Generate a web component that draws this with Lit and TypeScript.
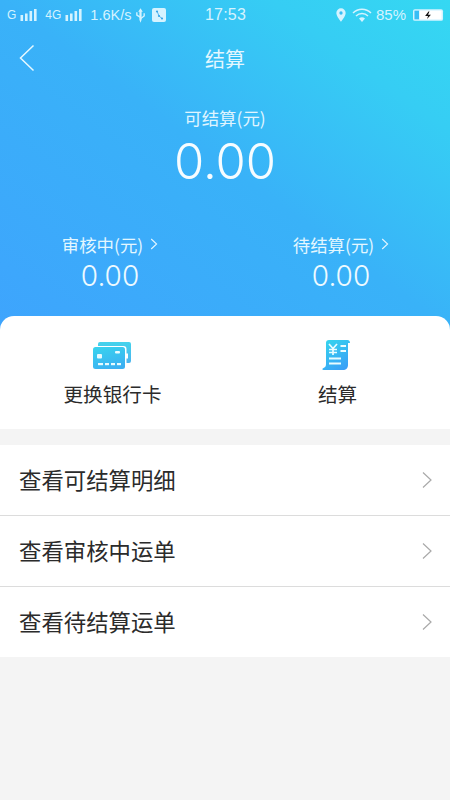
import { LitElement, html, css } from "lit";
import { customElement } from "lit/decorators.js";

const chev = html`<svg class="chev" viewBox="0 0 12 20" width="12" height="20"><path d="M2 2.500 10 10 2 17.500" fill="none" stroke="#a9a9a9" stroke-width="1.200"/></svg>`;
const smallChev = html`<svg class="small-chev" viewBox="0 0 8 12" width="8" height="12"><path d="M1.200 1 6.600 6 1.200 11" fill="none" stroke="#e4f6ff" stroke-width="1.100"/></svg>`;
const bars = html`<svg viewBox="0 0 18 14" width="18" height="14"><g fill="#d5f3ff"><rect x="0.500" y="7" width="2.600" height="6"/><rect x="5" y="5.500" width="2.600" height="7.500"/><rect x="9.500" y="3" width="2.600" height="10"/><rect x="14" y="1" width="2.600" height="12"/></g></svg>`;

@customElement("app-root")
export class AppRoot extends LitElement {
  static styles = css`
    :host { display: block; width: 450px; height: 800px; overflow: hidden; background: #f4f4f4;
      font-family: "Noto Sans CJK SC", "Noto Sans", sans-serif; }
    .top { height: 330px; box-sizing: border-box; background: linear-gradient(to bottom left, #35d8f2 0%, #36cdf4 20%, #39b2f8 50%, #3ea4fd 100%); color: #e6f8ff; display: flex; flex-direction: column; }
    .status { height: 30px; display: grid; grid-template-columns: 1fr auto 1fr; align-items: center; padding: 0 6px 0 7px; font-family: "Liberation Sans", sans-serif; font-size: 14.500px; color: #d5f3ff; }
    .sl, .sr { display: flex; align-items: center; gap: 4px; }
    .sr { justify-content: flex-end; }
    .sl .g { font-size: 12px; }
    .sl .net { margin-left: 3px; }
    .sl .speed { margin-left: 3px; }
    .box { margin-left: 2px; }
    .time { font-size: 16px; letter-spacing: 0.200px; }
    .loc { margin-right: 2px; }
    .pct { font-size: 15px; margin-right: 3px; margin-top: -2px; }
    .nav { height: 56px; position: relative; display: flex; align-items: center; justify-content: center; font-size: 20px; color: #e3f7ff; }
    .back { position: absolute; left: 18px; top: 14px; }
    .main { text-align: center; margin-top: 20px; }
    .main .label { font-size: 17.400px; line-height: 24px; color: #e0f5ff; }
    .main .value { font-family: Inter, sans-serif; font-weight: 350; font-size: 49px; line-height: 56px; margin-top: 4px; color: #f6fcff; }
    .subs { display: grid; grid-template-columns: 220px 218px; column-gap: 12px; margin-top: 43px; text-align: center; }
    .sub .label { font-size: 17.400px; line-height: 24px; display: flex; gap: 7px; justify-content: center; align-items: center; color: #e3f7ff; }
    .sub .value { font-family: Inter, sans-serif; font-weight: 350; font-size: 28px; line-height: 34px; margin-top: 2px; color: #eefaff; }
    .small-chev { margin-top: -3px; }
    .actions { position: relative; margin-top: -14px; height: 113px; background: #fff; border-radius: 14px 14px 0 0; display: grid; grid-template-columns: 225px 225px; }
    .action { display: flex; flex-direction: column; align-items: center; padding-top: 24px; font-size: 19.600px; color: #2b2b2b; }
    .action span { line-height: 28px; margin-top: 10px; }
    .card-icon { margin: 2px 0 0 -1px; }
    .bill-icon { margin-right: 4px; }
    .list { margin-top: 16px; background: #fff; }
    .row { height: 70px; display: flex; align-items: center; justify-content: space-between; padding: 0 17px 0 19px; font-size: 22.400px; color: #2b2b2b; border-bottom: 1px solid #dcdcdc; }
    .row span { margin-bottom: 2px; }
    .row:last-child { border-bottom: none; }
  `;

  render() {
    return html`
      <div class="top">
        <div class="status">
          <div class="sl">
            <span class="g">G</span>${bars}
            <span class="g net">4G</span>${bars}
            <span class="speed">1.6K/s</span>
            <svg viewBox="0 0 12 18" width="11" height="17"><path d="M6 1 8.500 5H7.200v8.500L6 17l-1.200-3.500V5H3.500Z" fill="#d5f3ff"/><path d="M6 11 2 8.500V5.500M6 12.500 10 9.500V6.500" fill="none" stroke="#d5f3ff" stroke-width="1.500"/></svg>
            <svg class="box" viewBox="0 0 14 14" width="14" height="14"><rect width="14" height="14" rx="2" fill="#d5f3ff"/><path d="M5 3 7 8 10 10.500" fill="none" stroke="#3aa6e8" stroke-width="0.800"/><circle cx="5" cy="3.500" r="1.100" fill="#3aa6e8"/><circle cx="7" cy="8" r="1.100" fill="#3aa6e8"/><circle cx="10" cy="10.500" r="1.100" fill="#3aa6e8"/></svg>
          </div>
          <div class="time">17:53</div>
          <div class="sr">
            <svg class="loc" viewBox="0 0 12 16" width="10" height="14"><path d="M6 0a5.600 5.600 0 0 1 5.600 5.600C11.600 9.500 6 16 6 16S.4 9.500.4 5.600A5.600 5.600 0 0 1 6 0Z" fill="#d5f3ff"/><circle cx="6" cy="5.600" r="2" fill="#38bdf5"/></svg>
            <svg viewBox="0 0 20 14" width="20" height="14"><g fill="none" stroke="#d5f3ff" stroke-width="1.500"><path d="M1 5a12.500 12.500 0 0 1 18 0"/><path d="M4 8a8.500 8.500 0 0 1 12 0"/></g><path d="M7 10.500a4.500 4.500 0 0 1 6 0L10 14Z" fill="#d5f3ff"/></svg>
            <span class="pct">85%</span>
            <svg viewBox="0 0 32 14" width="31" height="14"><rect x="0" y="1" width="31" height="12" rx="2" fill="#d5f3ff"/><rect x="1.500" y="2.500" width="5" height="9" fill="#38bdf5"/><rect x="6.500" y="2.500" width="23" height="9" fill="#fff"/><path d="M16 3.500 12.500 8h3l-1 3 4-4.200h-3l1.500-3.300Z" fill="#111"/></svg>
          </div>
        </div>
        <div class="nav">
          <svg class="back" viewBox="0 0 18 28" width="18" height="28"><path d="M15.500 1.500 2.500 14l13 12.500" fill="none" stroke="#e6f8ff" stroke-width="1.500"/></svg>
          结算
        </div>
        <div class="main">
          <div class="label">可结算(元)</div>
          <div class="value">0.00</div>
        </div>
        <div class="subs">
          <div class="sub"><div class="label">审核中(元) ${smallChev}</div><div class="value">0.00</div></div>
          <div class="sub"><div class="label">待结算(元) ${smallChev}</div><div class="value">0.00</div></div>
        </div>
      </div>
      <div class="actions">
        <div class="action">
          <svg class="card-icon" viewBox="0 0 38 28" width="38" height="28">
            <defs>
              <linearGradient id="c1" x1="0.200" y1="0" x2="0.600" y2="1"><stop offset="0" stop-color="#38d2ee"/><stop offset="1" stop-color="#3bb0f2"/></linearGradient>
              <linearGradient id="c1b" x1="0" y1="0" x2="0" y2="1"><stop offset="0" stop-color="#44d3ec"/><stop offset="1" stop-color="#4cb4ee"/></linearGradient>
            </defs>
            <path d="M5 2a2 2 0 0 1 2-2h29a2 2 0 0 1 2 2v17a2 2 0 0 1-2 2h-2.500v-4.500H35v-5h-1.500V7a3 3 0 0 0-3-3H5Z" fill="url(#c1b)"/>
            <rect x="0" y="5" width="32" height="22" rx="2.500" fill="url(#c1)"/>
            <rect x="4" y="12" width="5" height="4.500" rx="1" fill="#e8fbff"/>
            <rect x="22" y="9" width="5" height="2.500" rx="1" fill="#e8fbff"/>
            <g fill="#e8fbff"><rect x="5" y="21" width="5" height="2.200"/><rect x="12" y="21" width="4" height="2.200"/><rect x="18" y="21" width="4" height="2.200"/><rect x="24" y="21" width="4" height="2.200"/></g>
          </svg>
          <span>更换银行卡</span>
        </div>
        <div class="action">
          <svg class="bill-icon" viewBox="0 0 28 30" width="28" height="30">
            <defs>
              <linearGradient id="c2" x1="0.200" y1="0" x2="0.800" y2="1"><stop offset="0" stop-color="#35d3ee"/><stop offset="1" stop-color="#3a9ef7"/></linearGradient>
            </defs>
            <path d="M4 3a3 3 0 0 1 3-3h18.500C27 0 28 1 28 3h-2v22c0 3-2 5-5 5H1.500C0 30 0 28.500 1.500 28 3.500 27 4 26 4 24Z" fill="url(#c2)"/>
            <path d="M7 4l4 4.500 4-4.500M7 9.500h8M7 12.500h8M11 8.500v6.500" fill="none" stroke="#eafcff" stroke-width="1.700"/>
            <rect x="18.500" y="5" width="5.500" height="2" fill="#eafcff"/><rect x="18.500" y="10" width="5.500" height="2" fill="#eafcff"/>
            <rect x="7" y="17.500" width="12" height="2" fill="#eafcff"/><rect x="7" y="22.500" width="12" height="2" fill="#eafcff"/>
          </svg>
          <span>结算</span>
        </div>
      </div>
      <div class="list">
        <div class="row"><span>查看可结算明细</span> ${chev}</div>
        <div class="row"><span>查看审核中运单</span> ${chev}</div>
        <div class="row"><span>查看待结算运单</span> ${chev}</div>
      </div>
    `;
  }
}
